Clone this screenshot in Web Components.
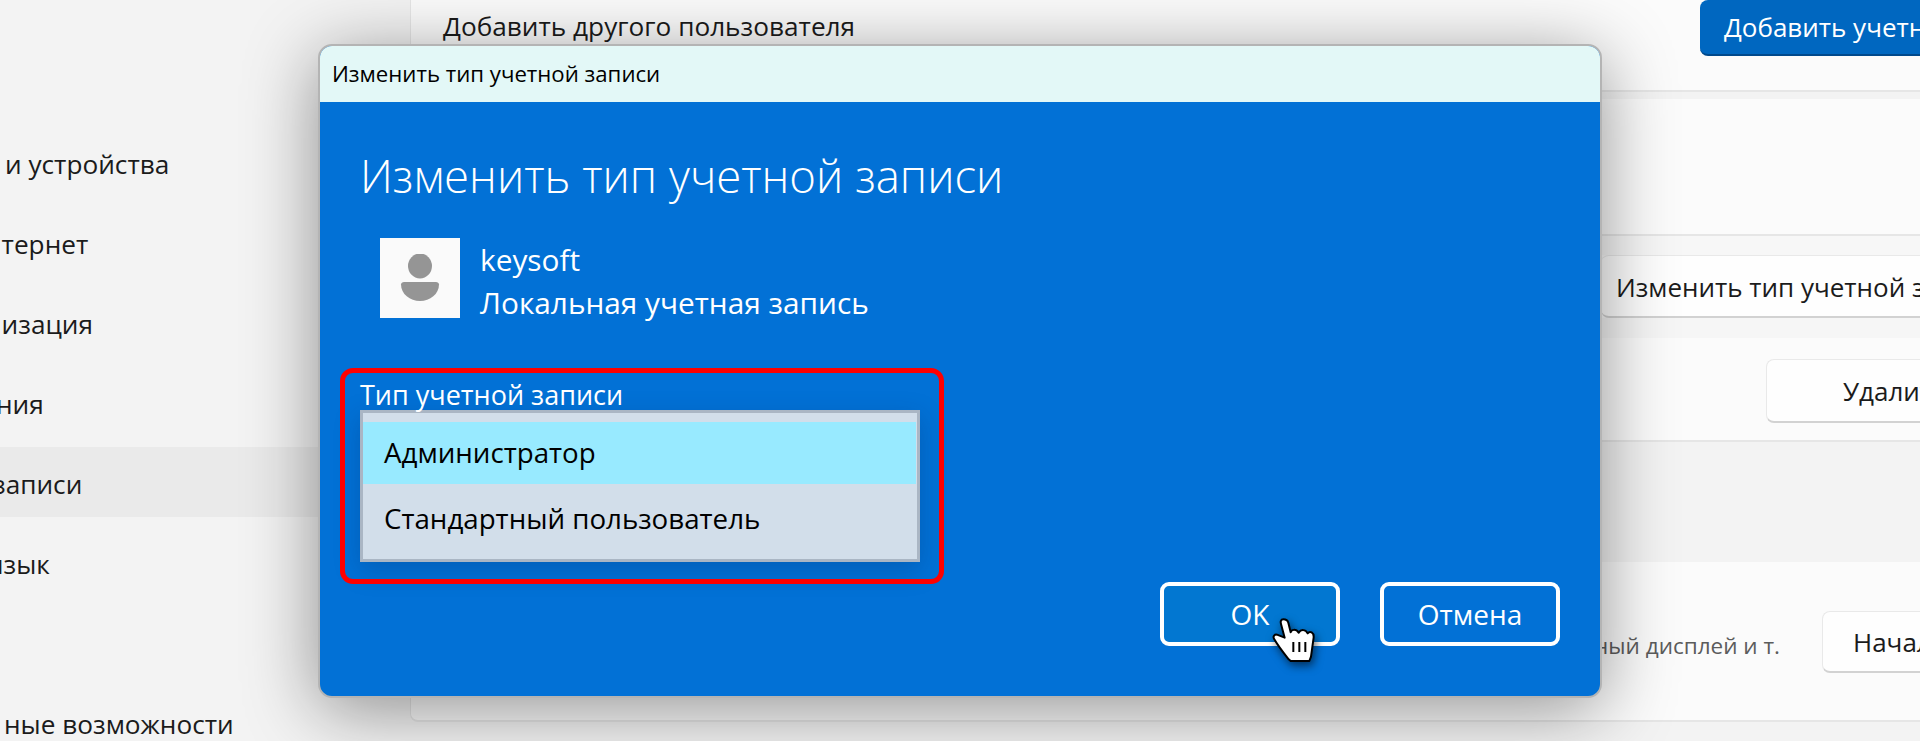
<!DOCTYPE html>
<html lang="ru">
<head>
<meta charset="utf-8">
<title>Изменить тип учетной записи</title>
<style>
  html, body { margin: 0; height: 741px; overflow: hidden; }
  body { font-family: "Open Sans", "Noto Sans", sans-serif; color: #1b1b1b; background: #f3f3f3; }
</style>
</head>
<body>
<settings-shell>
  <account-dialog slot="overlay"></account-dialog>
  <hand-cursor slot="overlay"></hand-cursor>
</settings-shell>

<script>
class NavItem extends HTMLElement {
  connectedCallback() {
    this.attachShadow({ mode: "open" });
    const shift = this.getAttribute("shift") || "0";
    this.shadowRoot.innerHTML = `
      <style>
        :host {
          display: flex;
          align-items: center;
          height: 70px;
          overflow: hidden;
          font-size: 26.200px;
          color: #1b1b1b;
          white-space: nowrap;
        }
        :host([selected]) { background: #eaeaea; }
        span { margin-left: ${shift}px; padding-top: 3px; }
      </style>
      <span><slot></slot></span>
    `;
  }
}

class FluentButton extends HTMLElement {
  connectedCallback() {
    this.attachShadow({ mode: "open" });
    this.shadowRoot.innerHTML = `
      <style>
        :host {
          display: flex;
          align-items: center;
          box-sizing: border-box;
          height: 64px;
          padding-left: var(--pad, 30px);
          padding-top: var(--drop, 0);
          background: #fefefe;
          border: 1px solid #e9e9e9;
          border-bottom: 2px solid #d2d2d2;
          border-radius: 8px 0 0 8px;
          border-right: 0;
          font-size: 26px;
          white-space: nowrap;
          color: #1b1b1b;
        }
        :host([primary]) {
          background: #0067c0;
          color: #fff;
          border: 0;
          border-bottom: 2px solid #00498c;
        }
      </style>
      <slot></slot>
    `;
  }
}

class SettingsShell extends HTMLElement {
  constructor() {
    super();
    this.attachShadow({ mode: "open" });
    this.shadowRoot.innerHTML = `
      <style>
        :host {
          display: grid;
          grid-template-columns: 410px 1fr;
          position: relative;
          width: 1920px;
          height: 741px;
          overflow: hidden;
          background: #f3f3f3;
        }
        nav { display: flex; flex-direction: column; padding-top: 127px; gap: 10px; }
        .spacer { height: 70px; }
        main { display: flex; flex-direction: column; min-width: 0; overflow: hidden; }
        .card {
          background: #fbfbfb;
          border-left: 1px solid #e6e6e6;
          border-bottom: 2px solid #e6e6e6;
          box-sizing: border-box;
          flex: none;
        }
        .add {
          height: 92px;
          display: grid;
          grid-template-columns: 1257px 1fr;
          padding-left: 32px;
          font-size: 26.200px;
          align-items: start;
        }
        .add .label { padding-top: 8px; }
        .add fluent-button { height: 56px; --pad: 24px; }
        .gap { flex: none; }
        .blank { height: 137px; margin-top: 7px; }
        .type-row { height: 63px; padding-left: 1190px; border-bottom: 0; }
        .type-row fluent-button { height: 63px; --pad: 15px; --drop: 2px; border-left: 0; }
        .remove-row { height: 104px; padding: 21px 0 0 1355px; }
        .remove-row fluent-button { --pad: 76px; }
        .start-row {
          height: 160px;
          padding: 49px 0 0 1050px;
          display: flex;
          gap: 42px;
          border-bottom-left-radius: 8px;
        }
        .start-row .hint { flex: none; color: #5c5c5c; font-size: 22.500px; padding-top: 19px; width: 319px; text-align: right; white-space: nowrap; }
        .start-row fluent-button { flex: none; width: 300px; height: 62px; }
      </style>
      <nav>
        <nav-item shift="5">и устройства</nav-item>
        <nav-item shift="-15">нтернет</nav-item>
        <nav-item shift="-15">низация</nav-item>
        <nav-item shift="-4">ния</nav-item>
        <nav-item selected shift="-7">записи</nav-item>
        <nav-item shift="-11">язык</nav-item>
        <div class="spacer"></div>
        <nav-item shift="4">ные возможности</nav-item>
      </nav>
      <main>
        <section class="card add">
          <div class="label">Добавить другого пользователя</div>
          <fluent-button primary>Добавить учетную запись</fluent-button>
        </section>
        <section class="card blank"></section>
        <div class="gap" style="height:19px;background:#f7f7f7"></div>
        <section class="card type-row"><fluent-button>Изменить тип учетной записи</fluent-button></section>
        <div class="gap" style="height:20px;background:#f6f6f6"></div>
        <section class="card remove-row"><fluent-button>Удалить</fluent-button></section>
        <div class="gap" style="height:120px"></div>
        <section class="card start-row">
          <div class="hint">ный дисплей и т.</div>
          <fluent-button>Начало работы</fluent-button>
        </section>
      </main>
      <slot name="overlay"></slot>
    `;
  }
}

class DialogButton extends HTMLElement {
  constructor() {
    super();
    this.attachShadow({ mode: "open" });
    this.shadowRoot.innerHTML = `
      <style>
        :host {
          display: flex;
          align-items: center;
          justify-content: center;
          box-sizing: border-box;
          width: 180px;
          height: 64px;
          border: 4px solid #fff;
          border-radius: 9px;
          color: #fff;
          font-size: 28px;
        }
        :host([hover]) { background: #0277d1; }
      </style>
      <slot></slot>
    `;
  }
}

class AccountDialog extends HTMLElement {
  constructor() {
    super();
    this.attachShadow({ mode: "open" });
    this.shadowRoot.innerHTML = `
      <style>
        :host {
          position: absolute;
          left: 318px;
          top: 44px;
          width: 1284px;
          height: 654px;
          box-sizing: border-box;
          display: flex;
          flex-direction: column;
          border: 2px solid #b4b4b4;
          border-radius: 14px;
          background: #0271d6;
          overflow: hidden;
          box-shadow: 0 12px 72px rgba(0, 0, 0, .42);
        }
        .title {
          flex: none;
          height: 56px;
          box-sizing: border-box;
          padding: 13px 0 0 12px;
          background: #e3f8f7;
          color: #000;
          font-size: 22.200px;
          line-height: 30px;
        }
        .body { position: relative; flex: 1; color: #fff; padding: 0 40px; }
        h1 { margin: 0; padding-top: 43px; font-size: 45.500px; line-height: 60px; font-weight: 300; }
        .user { display: flex; gap: 20px; margin: 33px 0 0 20px; }
        .avatar { width: 80px; height: 80px; background: #fafafa; display: flex; align-items: center; justify-content: center; }
        .names { font-size: 29.800px; line-height: 43px; }
        .group { position: relative; margin-top: 56px; width: 560px; }
        .label { font-size: 27px; line-height: 30px; }
        .list {
          box-sizing: border-box;
          height: 152px;
          padding: 9px 0 0;
          border: 3px solid #aab6c4;
          background: #d2deea;
          color: #000;
          font-size: 27.700px;
          box-shadow: 0 8px 24px rgba(0, 40, 90, .25);
        }
        .opt { height: 70px; display: flex; align-items: center; padding-left: 21px; padding-bottom: 2px; box-sizing: border-box; }
        .opt.sel { height: 62px; background: #98eaff; margin-right: 1px; }
        .mark {
          position: absolute;
          left: -20px; top: -12px;
          width: 604px; height: 216px;
          box-sizing: border-box;
          border: 5px solid #f00;
          border-radius: 13px;
        }
        .actions { position: absolute; left: 840px; top: 480px; display: flex; gap: 40px; }
      </style>
      <div class="title">Изменить тип учетной записи</div>
      <div class="body">
        <h1>Изменить тип учетной записи</h1>
        <div class="user">
          <div class="avatar">
            <svg width="40" height="48" viewBox="0 0 40 48">
              <ellipse cx="20" cy="12" rx="12" ry="12.500" fill="#959595"/>
              <path d="M1 30.500C1 29 2.500 28 4 28H36C37.500 28 39 29 39 30.500C39 40 30 47 20 47C10 47 1 40 1 30.500Z" fill="#959595"/>
            </svg>
          </div>
          <div class="names"><div>keysoft</div><div>Локальная учетная запись</div></div>
        </div>
        <div class="group">
          <div class="mark"></div>
          <div class="label">Тип учетной записи</div>
          <div class="list">
            <div class="opt sel">Администратор</div>
            <div class="opt">Стандартный пользователь</div>
          </div>
        </div>
        <div class="actions">
          <dialog-button hover>OK</dialog-button>
          <dialog-button>Отмена</dialog-button>
        </div>
      </div>
    `;
  }
}

class HandCursor extends HTMLElement {
  constructor() {
    super();
    this.attachShadow({ mode: "open" });
    this.shadowRoot.innerHTML = `
      <style>
        :host { position: absolute; left: 1260px; top: 600px; width: 100px; height: 80px; display: block; filter: drop-shadow(2px 4px 4px rgba(0,0,0,.55)); }
        svg { display: block; }
      </style>
      <svg width="100" height="80" viewBox="0 0 300 240">
        <path d="M70 58C62 58 61 65 63 72L74 113L51 104C44 102 38 109 42 116C52 134 68 155 86 178L92 183H148L153 170L161 112C162 98 150 91 143 100C137 88 123 87 116 98C108 86 94 88 92 97L85 68C83 61 77 58 70 58Z" fill="#fff" stroke="#000" stroke-width="6" stroke-linejoin="round"/>
        <path d="M100 126V156M118 126V156M136 126V156" stroke="#000" stroke-width="6" fill="none"/>
      </svg>
    `;
  }
}

customElements.define("nav-item", NavItem);
customElements.define("fluent-button", FluentButton);
customElements.define("settings-shell", SettingsShell);
customElements.define("dialog-button", DialogButton);
customElements.define("account-dialog", AccountDialog);
customElements.define("hand-cursor", HandCursor);
</script>
</body>
</html>
